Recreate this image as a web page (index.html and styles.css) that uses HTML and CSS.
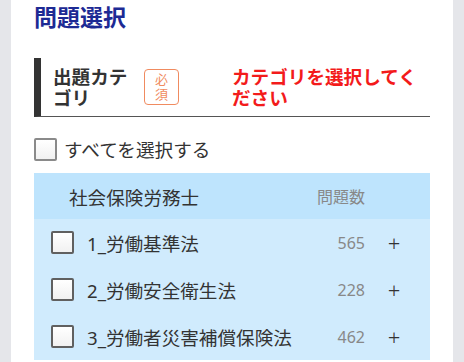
FILE: index.html
```html
<!DOCTYPE html>
<html lang="ja">
<head>
  <meta charset="UTF-8">
  <meta name="viewport" content="width=device-width, initial-scale=1.0">
  <title>問題選択</title>
  <link rel="stylesheet" href="styles.css">
</head>
<body>
  <div class="panel">
    <h1>問題選択</h1>

    <div class="field-head">
      <div class="field-name">出題カテゴリ</div>
      <span class="badge">必須</span>
      <div class="field-error">カテゴリを選択してください</div>
    </div>

    <label class="check-all">
      <span class="box"></span>
      <span>すべてを選択する</span>
    </label>

    <div class="cat-table">
      <div class="cat-head">
        <span class="cat-title">社会保険労務士</span>
        <span class="cat-count">問題数</span>
        <span class="cat-plus"></span>
      </div>
      <div class="cat-row">
        <span class="box"></span>
        <span class="cat-name">1_労働基準法</span>
        <span class="cat-count">565</span>
        <span class="cat-plus">+</span>
      </div>
      <div class="cat-row">
        <span class="box"></span>
        <span class="cat-name">2_労働安全衛生法</span>
        <span class="cat-count">228</span>
        <span class="cat-plus">+</span>
      </div>
      <div class="cat-row">
        <span class="box"></span>
        <span class="cat-name">3_労働者災害補償保険法</span>
        <span class="cat-count">462</span>
        <span class="cat-plus">+</span>
      </div>
    </div>
  </div>
</body>
</html>
```

FILE: styles.css
```css
body {
  margin: 0;
  background-color: #e5e6ea;
  font-family: "Noto Sans", "Noto Sans CJK JP", sans-serif;
  color: #333;
  font-size: 18.6px;
}

.panel {
  margin: 0 11px;
  min-height: 100vh;
  background-color: #fff;
  padding: 2px 23px 0;
  box-sizing: border-box;
}

h1 {
  margin: 0;
  font-size: 23px;
  line-height: 30px;
  color: #1d2a94;
  font-weight: 700;
}

.field-head {
  display: flex;
  align-items: center;
  margin-top: 26px;
  padding: 8px 0 8px 12px;
  border-left: 7px solid #333;
  border-bottom: 1px solid #555;
  line-height: 21px;
}

.field-name {
  width: 85px;
  margin-right: 6px;
  font-weight: 700;
}

.badge {
  width: 35px;
  height: 36px;
  box-sizing: border-box;
  border: 1px solid #f08b60;
  border-radius: 4px;
  color: #f08b60;
  font-size: 13px;
  line-height: 15px;
  padding: 2px 10px;
  text-align: center;
}

.field-error {
  flex: 1;
  margin-left: 53px;
  color: #f31b1b;
  font-weight: 700;
}

.check-all {
  display: flex;
  align-items: center;
  gap: 7px;
  margin-top: 21px;
  height: 23px;
  line-height: 23px;
}

.box {
  width: 23px;
  height: 23px;
  box-sizing: border-box;
  border: 2px solid #8a8a8a;
  border-radius: 2px;
  background: linear-gradient(#fff, #f1f1f1);
  flex: none;
}

.cat-table {
  margin-top: 12px;
}

.cat-head,
.cat-row {
  display: flex;
  align-items: center;
}

.cat-head {
  height: 46px;
  background-color: #bee4fd;
  padding-left: 35px;
}

.cat-title {
  flex: 1;
}

.cat-row {
  height: 47px;
  background-color: #d0ebfd;
  padding-left: 17px;
}

.cat-row .box {
  border-color: #606060;
}

.cat-name {
  flex: 1;
  margin-left: 13px;
}

.cat-count {
  color: #888;
  font-size: 16px;
}

.cat-plus {
  width: 20px;
  margin: 0 26px 0 19px;
  text-align: center;
  font-size: 22px;
  font-weight: 300;
  color: #333;
}
```
